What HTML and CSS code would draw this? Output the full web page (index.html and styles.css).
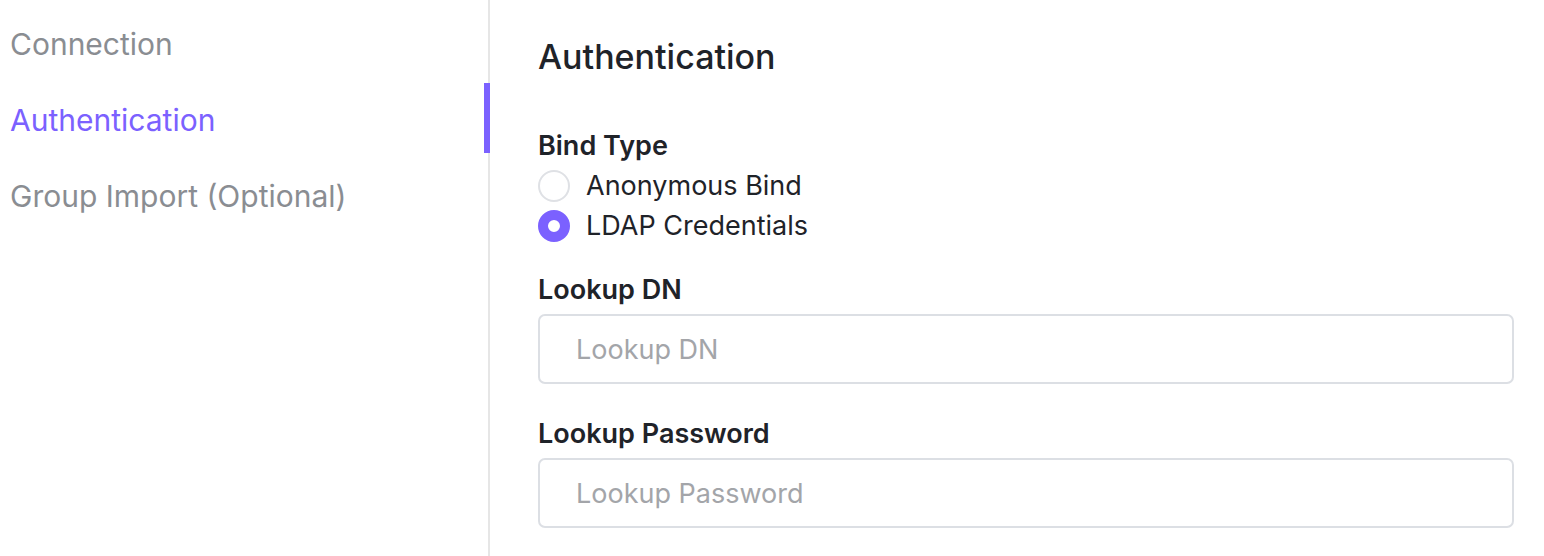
FILE: index.html
```html
<!DOCTYPE html>
<html>
<head>
<meta charset="utf-8">
<link rel="stylesheet" href="styles.css">
</head>
<body>
<div class="page">
  <nav class="sidebar">
    <div class="nav-item">Connection</div>
    <div class="nav-item active">Authentication</div>
    <div class="nav-item">Group Import (Optional)</div>
  </nav>
  <main class="content">
    <h1 class="title">Authentication</h1>
    <div class="field radio-field">
      <div class="label">Bind Type</div>
      <div class="radios">
        <label class="radio"><span class="dot"></span><span>Anonymous Bind</span></label>
        <label class="radio checked"><span class="dot"></span><span>LDAP Credentials</span></label>
      </div>
    </div>
    <div class="field">
      <div class="label">Lookup DN</div>
      <input class="input" type="text" placeholder="Lookup DN">
    </div>
    <div class="field">
      <div class="label">Lookup Password</div>
      <input class="input" type="text" placeholder="Lookup Password">
    </div>
  </main>
</div>
</body>
</html>
```
FILE: styles.css
```css
* { box-sizing: border-box; }
html, body { margin: 0; padding: 0; background: #fff; }
body { font-family: Inter, "Noto Sans", sans-serif; color: #1f2329; }
.page { display: flex; height: 556px; overflow: hidden; }
.sidebar {
  width: 490px;
  flex: none;
  border-right: 2px solid #e6e6e6;
  padding-top: 6px;
  display: flex;
  flex-direction: column;
}
.nav-item {
  height: 76px;
  display: flex;
  align-items: center;
  padding-left: 10px;
  font-size: 30px;
  color: #8a8d92;
  position: relative;
  margin-right: -2px;
}
.nav-item.active { color: #7b61ff; }
.nav-item.active::after {
  content: "";
  position: absolute;
  right: 0;
  top: 1px;
  width: 6px;
  height: 70px;
  background: #7b61ff;
}
.content {
  flex: 1;
  padding: 36px 30px 0 48px;
  display: flex;
  flex-direction: column;
}
.title {
  margin: 0 0 52px;
  font-size: 34px;
  font-weight: 500;
  line-height: 42px;
}
.field { display: flex; flex-direction: column; margin-bottom: 34px; }
.radio-field { margin-bottom: 32px; }
.label {
  font-size: 27px;
  font-weight: 600;
  line-height: 32px;
  margin-bottom: 8px;
}
.radios { display: flex; flex-direction: column; gap: 8px; }
.radio {
  display: flex;
  align-items: center;
  gap: 16px;
  font-size: 27px;
  line-height: 32px;
  color: #1f2329;
}
.dot {
  width: 32px;
  height: 32px;
  border-radius: 50%;
  border: 2px solid #dfe1e5;
  flex: none;
}
.radio.checked .dot { border: 10px solid #7b61ff; background: #fff; }
.input {
  height: 70px;
  border: 2px solid #dcdfe4;
  border-radius: 7px;
  padding: 0 36px;
  font-family: inherit;
  font-size: 27px;
  color: #1f2329;
  outline: none;
  width: 100%;
}
.input::placeholder { color: #a3a5a9; }
```
